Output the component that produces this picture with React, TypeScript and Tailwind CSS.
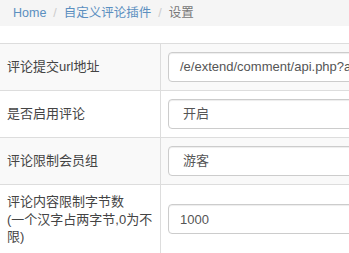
const rows: { label: React.ReactNode; value: string; kind: 'input' | 'select'; striped: boolean }[] = [
  { label: '评论提交url地址', value: '/e/extend/comment/api.php?action=post', kind: 'input', striped: true },
  { label: '是否启用评论', value: '开启', kind: 'select', striped: false },
  { label: '评论限制会员组', value: '游客', kind: 'select', striped: true },
  {
    label: (
      <>
        评论内容限制字节数
        <br />
        (一个汉字占两字节,0为不限)
      </>
    ),
    value: '1000',
    kind: 'input',
    striped: false,
  },
];

export default function App() {
  return (
    <div
      className="w-[349px] h-[253px] overflow-hidden bg-white text-[13px] text-[#444]"
      style={{ fontFamily: '"Liberation Sans", "Noto Sans CJK SC", sans-serif' }}
    >
      <div className="h-[26px] bg-[#f5f5f5] flex items-center pl-[13px] text-[12.5px] whitespace-nowrap">
        <span className="text-[#5b8fc0]">Home</span>
        <span className="text-[#ccc] px-[7px]">/</span>
        <span className="text-[#5b8fc0]">自定义评论插件</span>
        <span className="text-[#ccc] px-[7px]">/</span>
        <span className="text-[#777]">设置</span>
      </div>

      <div className="mt-[17px] w-[460px] border-b border-[#ddd]">
        {rows.map((row, i) => (
          <div
            key={i}
            className={`grid grid-cols-[161px_1fr] border-t border-[#ddd] ${row.striped ? 'bg-[#f9f9f9]' : 'bg-white'}`}
          >
            <div className="border-r border-[#ddd] pl-[7px] pr-[2px] py-[8px] flex items-center leading-[17.5px]">
              <div>{row.label}</div>
            </div>
            <div className="pl-[7px] pr-2 py-[8px] flex items-center">
              <div
                className={`h-[30px] w-full flex items-center rounded-[4px] border border-[#ccc] bg-white shadow-[inset_0_1px_1px_rgba(0,0,0,0.075)] whitespace-nowrap text-[#555] ${row.kind === 'select' ? 'pl-[14px]' : 'pl-[11px]'}`}
              >
                {row.value}
              </div>
            </div>
          </div>
        ))}
      </div>
    </div>
  );
}
